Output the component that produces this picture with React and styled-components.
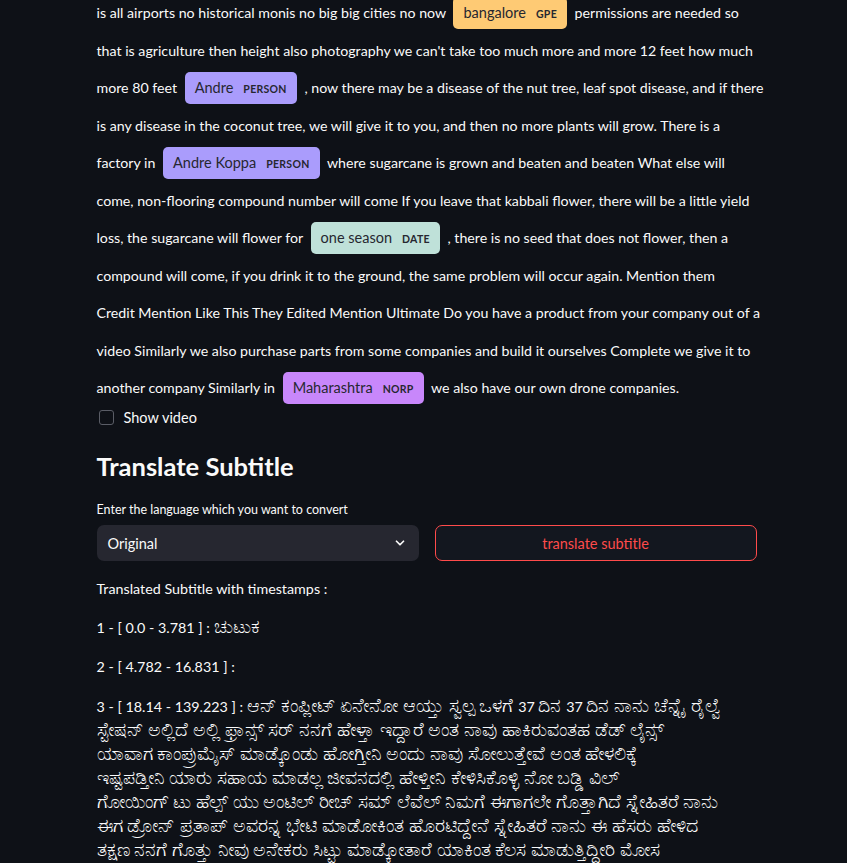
import React from 'react';
import styled, { createGlobalStyle } from 'styled-components';

const GlobalStyle = createGlobalStyle`
  html, body {
    margin: 0;
    padding: 0;
    background: #0e1117;
    overflow: hidden;
  }
  body {
    font-family: Lato, "Source Sans Pro", "Noto Sans", sans-serif;
    color: #fafafa;
  }
`;

const Main = styled.div`
  width: 660px;
  margin: -6px auto 0;
  padding-left: 6px;
  display: flex;
  flex-direction: column;
`;

const EntityText = styled.div`
  font-size: 14.2px;
  line-height: 37.5px;
  white-space: nowrap;
`;

const colors = {
  GPE: '#feca74',
  PERSON: '#aa9cfc',
  DATE: '#bfe1d9',
  NORP: '#c887fb',
};

const Mark = styled.mark`
  background: ${p => colors[p.$label]};
  color: #262730;
  padding: 7px 10px 8px 10px;
  margin: 0 4px;
  line-height: 1;
  border-radius: 5px;
  font-size: 14.5px;
`;

const Tag = styled.span`
  font-size: 10.5px;
  font-weight: 700;
  line-height: 1;
  text-transform: uppercase;
  margin-left: 10px;
  letter-spacing: 0.3px;
`;

const Ent = ({ label, children }) => (
  <Mark $label={label}>
    {children}
    <Tag>{label}</Tag>
  </Mark>
);

const CheckRow = styled.label`
  display: flex;
  align-items: center;
  gap: 10px;
  font-size: 14.5px;
  margin-top: -1px;
  height: 24px;
  padding-left: 2px;
`;

const Box = styled.span`
  width: 13px;
  height: 13px;
  border: 1px solid #5a5d66;
  border-radius: 3px;
`;

const Heading = styled.h3`
  font-size: 25.5px;
  font-weight: 700;
  margin: 21px 0 0;
  line-height: 1.2;
`;

const FieldLabel = styled.div`
  font-size: 12.5px;
  margin-top: 21px;
  margin-bottom: 8px;
`;

const Row = styled.div`
  display: grid;
  grid-template-columns: 1fr 1fr;
  gap: 16px;
`;

const Select = styled.div`
  height: 36px;
  background: #262730;
  border-radius: 7px;
  display: flex;
  align-items: center;
  justify-content: space-between;
  padding: 0 12px 0 11px;
  font-size: 14.5px;
`;

const Button = styled.button`
  height: 36px;
  background: #13171f;
  border: 1px solid #ff4b4b;
  border-radius: 7px;
  color: #ff4b4b;
  font-family: inherit;
  font-size: 14.5px;
`;

const Result = styled.div`
  display: flex;
  flex-direction: column;
  gap: 15px;
  margin-top: 16px;
`;

const Line = styled.div`
  font-size: 14.3px;
  height: 24px;
  line-height: 24px;
  white-space: nowrap;
`;

const Block = styled.div`
  display: flex;
  flex-direction: column;
  margin-top: 1px;
`;

const Kn = styled.span`
  font-size: 18.5px;
  line-height: 1;
`;

const Chevron = () => (
  <svg width="14" height="14" viewBox="0 0 24 24" fill="none" stroke="#fafafa" strokeWidth="3" strokeLinecap="round" strokeLinejoin="round">
    <path d="M6 9l6 6 6-6" />
  </svg>
);

const kannadaLines = [
  'ಸ್ಟೇಷನ್ ಅಲ್ಲಿದೆ ಅಲ್ಲಿ ಫ್ರಾನ್ಸ್ ಸರ್ ನನಗೆ ಹೇಳ್ತಾ ಇದ್ದಾರೆ ಅಂತ ನಾವು ಹಾಕಿರುವಂತಹ ಡೆಡ್ ಲೈನ್ಸ್',
  'ಯಾವಾಗ ಕಾಂಪ್ರುಮೈಸ್ ಮಾಡ್ಕೊಂಡು ಹೋಗ್ತೀನಿ ಅಂದು ನಾವು ಸೋಲುತ್ತೇವೆ ಅಂತ ಹೇಳಲಿಕ್ಕೆ',
  'ಇಷ್ಟಪಡ್ತೀನಿ ಯಾರು ಸಹಾಯ ಮಾಡಲ್ಲ ಜೀವನದಲ್ಲಿ ಹೇಳ್ತೀನಿ ಕೇಳಿಸಿಕೊಳ್ಳಿ ನೋ ಬಡ್ಡಿ ವಿಲ್',
  'ಗೋಯಿಂಗ್ ಟು ಹೆಲ್ಪ್ ಯು ಅಂಟಿಲ್ ರೀಚ್ ಸಮ್ ಲೆವೆಲ್ ನಿಮಗೆ ಈಗಾಗಲೇ ಗೊತ್ತಾಗಿದೆ ಸ್ನೇಹಿತರೆ ನಾನು',
  'ಈಗ ಡ್ರೋನ್ ಪ್ರತಾಪ್ ಅವರನ್ನ ಭೇಟಿ ಮಾಡೋಕಿಂತ ಹೊರಟಿದ್ದೇನೆ ಸ್ನೇಹಿತರೆ ನಾನು ಈ ಹೆಸರು ಹೇಳಿದ',
  'ತಕ್ಷಣ ನನಗೆ ಗೊತ್ತು ನೀವು ಅನೇಕರು ಸಿಟ್ಟು ಮಾಡ್ಕೋತಾರೆ ಯಾಕಿಂತ ಕೆಲಸ ಮಾಡುತ್ತಿದ್ದೀರಿ ಮೋಸ',
];

export default function App() {
  return (
    <>
      <GlobalStyle />
      <Main>
        <EntityText>
          is all airports no historical monis no big big cities no now <Ent label="GPE">bangalore</Ent> permissions are needed so<br />
          that is agriculture then height also photography we can't take too much more and more 12 feet how much<br />
          more 80 feet <Ent label="PERSON">Andre</Ent> , now there may be a disease of the nut tree, leaf spot disease, and if there<br />
          is any disease in the coconut tree, we will give it to you, and then no more plants will grow. There is a<br />
          factory in <Ent label="PERSON">Andre Koppa</Ent> where sugarcane is grown and beaten and beaten What else will<br />
          come, non-flooring compound number will come If you leave that kabbali flower, there will be a little yield<br />
          loss, the sugarcane will flower for <Ent label="DATE">one season</Ent> , there is no seed that does not flower, then a<br />
          compound will come, if you drink it to the ground, the same problem will occur again. Mention them<br />
          Credit Mention Like This They Edited Mention Ultimate Do you have a product from your company out of a<br />
          video Similarly we also purchase parts from some companies and build it ourselves Complete we give it to<br />
          another company Similarly in <Ent label="NORP">Maharashtra</Ent> we also have our own drone companies.
        </EntityText>
        <CheckRow>
          <Box />
          Show video
        </CheckRow>
        <Heading>Translate Subtitle</Heading>
        <FieldLabel>Enter the language which you want to convert</FieldLabel>
        <Row>
          <Select>
            Original
            <Chevron />
          </Select>
          <Button>translate subtitle</Button>
        </Row>
        <Result>
          <Line>Translated Subtitle with timestamps :</Line>
          <Line>1 - [ 0.0 - 3.781 ] : <Kn>ಚುಟುಕ</Kn></Line>
          <Line>2 - [ 4.782 - 16.831 ] :</Line>
          <Block>
            <Line>
              3 - [ 18.14 - 139.223 ] : <Kn>ಆನ್ ಕಂಪ್ಲೀಟ್ ಏನೇನೋ ಆಯ್ತು ಸ್ವಲ್ಪ ಒಳಗೆ </Kn>37 <Kn>ದಿನ </Kn>37 <Kn>ದಿನ ನಾನು ಚೆನ್ನೈ ರೈಲ್ವೆ</Kn>
            </Line>
            {kannadaLines.map(l => (
              <Line key={l}><Kn>{l}</Kn></Line>
            ))}
          </Block>
        </Result>
      </Main>
    </>
  );
}
